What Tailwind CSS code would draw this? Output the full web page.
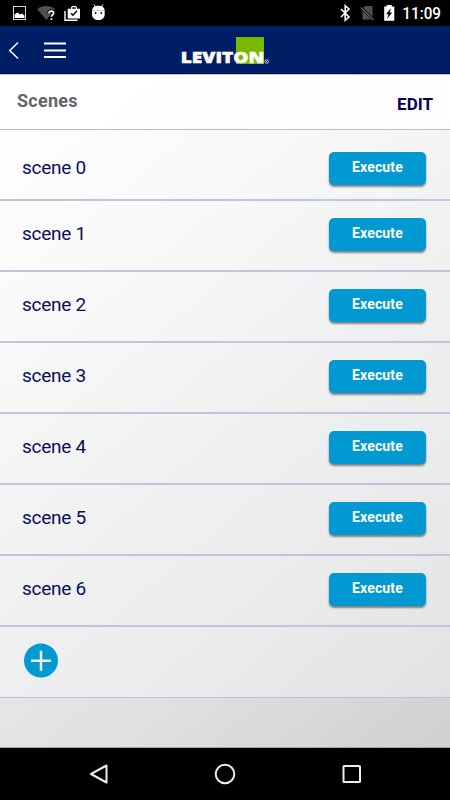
<!DOCTYPE html>
<html lang="en">
<head>
<meta charset="utf-8">
<title>Scenes</title>
<script src="https://cdn.jsdelivr.net/npm/@tailwindcss/browser@4"></script>
</head>
<body class="font-[Roboto,sans-serif]">
<div class="flex h-[800px] w-[450px] flex-col overflow-hidden bg-black">
  <div class="flex h-[26px] shrink-0 items-center">
    <svg width="450" height="26" viewBox="0 0 450 26">
      <rect x="13.500" y="6.500" width="12" height="13" fill="none" stroke="#d8d8d8" stroke-width="1"/>
      <path d="M14.500 18v-3.500l3-2 2.500 2 1.500-1 3 2V18z" fill="#fff"/>
      <path d="M37 9C42 5 50 5 55 9L46.500 20z" fill="#505050"/>
      <path d="M49 13.300c.2-1.600 1.200-2.200 2.400-2.200 1.300 0 2.200.8 2.200 2 0 1.700-2.200 1.800-2.200 3.700M51.400 18.200v1.800" fill="none" stroke="#000" stroke-width="3.500"/>
      <path d="M49 13.300c.2-1.600 1.200-2.200 2.400-2.200 1.300 0 2.200.8 2.200 2 0 1.700-2.200 1.800-2.200 3.700M51.400 18.200v1.800" fill="none" stroke="#fff" stroke-width="1.700"/>
      <path d="M65 11v9.300h12.500" fill="none" stroke="#fff" stroke-width="1.400"/>
      <path d="M67.700 8.700h3.300V7.200l1.200-1.200h3.600L77 7.200v1.500h3v9.800H67.700zM72.300 7.300v1.400h3.400V7.300z" fill="#fff" fill-rule="evenodd"/>
      <path d="M71 13.200l2 2 4-4.500" fill="none" stroke="#000" stroke-width="1.400"/>
      <path d="M92 11.500c0-4.300 2.800-5.700 6.400-5.700s6.300 1.400 6.300 5.700v3c0 3.500-2.700 5.500-6.300 5.500S92 18 92 14.500z" fill="#fff"/>
      <path d="M95.500 7.500L94 4.500M101.300 7.500l1.500-3" stroke="#fff" stroke-width="1"/>
      <path d="M92 10.500h12.700" stroke="#999" stroke-width=".5"/>
      <circle cx="95.600" cy="13" r=".9"/><circle cx="101.300" cy="13" r=".9"/>
      <path d="M341 9l8 8-3.800 3.300V5.700L349 9l-8 8" fill="none" stroke="#fff" stroke-width="1.600"/>
      <path d="M362.500 8.500L365 6h7.500v13.500h-10z" fill="#505050"/>
      <path d="M360.500 6.800l13 13" stroke="#000" stroke-width="2.600"/>
      <path d="M361 7.500l12.500 12.500" stroke="#606060" stroke-width="1.200"/>
      <path d="M384.200 6.500h2.500V5h5v1.500h2.600v14.300h-10.100z" fill="#fff"/>
      <path d="M391 8l-5 6.300h2.500L387 19l5.200-6.400h-2.600z" fill="#000"/>
      <text x="402.300" y="19.300" fill="#fff" font-family="Roboto" font-size="16.500" font-weight="500" textLength="38.700" lengthAdjust="spacingAndGlyphs">11:09</text>
    </svg>
  </div>
  <header class="flex h-12 shrink-0 border-b border-[#00114f] bg-[#001e66]">
    <svg width="450" height="48" viewBox="0 26 450 48">
      <path d="M18 42.500L9.800 50.500l8.200 8" fill="none" stroke="#fff" stroke-width="1.500"/>
      <path d="M44 43.500h22M44 50.500h22M44 57h22" stroke="#fff" stroke-width="2"/>
      <rect x="236" y="37" width="28" height="27" fill="#7ab800"/>
      <text x="180.800" y="63.200" fill="#fff" stroke="#fff" stroke-width=".5" font-family="'Open Sans',sans-serif" font-size="16.500" font-weight="800" textLength="83.500" lengthAdjust="spacingAndGlyphs">LEVITON</text>
      <circle cx="266.700" cy="61.500" r="1.800" fill="none" stroke="#d5daeb" stroke-width=".9"/>
      <circle cx="266.700" cy="61.500" r=".6" fill="#d5daeb"/>
    </svg>
  </header>
  <main class="flex h-[674px] shrink-0 flex-col border-t border-b border-t-[#bfbfc3] border-b-[#a2a3a5] bg-linear-[140deg,#fff_0%,#fbfbfb_15%,#e9eaeb_50%,#dedfe0_75%,#cfd0d2_100%]">
    <div class="flex h-[55px] shrink-0 items-center justify-between border-b border-[#b9bdd4] bg-white/85 pr-[17px] pl-[17px]">
      <h1 class="pb-[2px] text-[18px] leading-[22px] font-bold tracking-[0.25px] text-[#636469]">Scenes</h1>
      <button class="pt-[3px] text-[17px] leading-[22px] font-bold text-[#05005c]">EDIT</button>
    </div>
    <ul class="bg-white/35 text-[#0a0f5c]">
      <li class="flex h-[71px] items-start justify-between border-b-2 border-[#c1c5da] pt-[22px] pr-6 pl-[22px]"><span class="pt-1 text-[19px] leading-6 tracking-[-0.25px]">scene 0</span><button class="h-[33px] w-[97px] rounded-[5px] bg-[#0099d2] pb-[3px] text-[14px] font-bold tracking-[0.15px] text-white shadow-[0_2px_2px_rgba(0,0,0,0.45)]">Execute</button></li>
      <li class="flex h-[71px] items-start justify-between border-b-2 border-[#c1c5da] pt-[17px] pr-6 pl-[22px]"><span class="pt-1 text-[19px] leading-6 tracking-[-0.25px]">scene 1</span><button class="h-[33px] w-[97px] rounded-[5px] bg-[#0099d2] pb-[3px] text-[14px] font-bold tracking-[0.15px] text-white shadow-[0_2px_2px_rgba(0,0,0,0.45)]">Execute</button></li>
      <li class="flex h-[71px] items-start justify-between border-b-2 border-[#c1c5da] pt-[17px] pr-6 pl-[22px]"><span class="pt-1 text-[19px] leading-6 tracking-[-0.25px]">scene 2</span><button class="h-[33px] w-[97px] rounded-[5px] bg-[#0099d2] pb-[3px] text-[14px] font-bold tracking-[0.15px] text-white shadow-[0_2px_2px_rgba(0,0,0,0.45)]">Execute</button></li>
      <li class="flex h-[71px] items-start justify-between border-b-2 border-[#c1c5da] pt-[17px] pr-6 pl-[22px]"><span class="pt-1 text-[19px] leading-6 tracking-[-0.25px]">scene 3</span><button class="h-[33px] w-[97px] rounded-[5px] bg-[#0099d2] pb-[3px] text-[14px] font-bold tracking-[0.15px] text-white shadow-[0_2px_2px_rgba(0,0,0,0.45)]">Execute</button></li>
      <li class="flex h-[71px] items-start justify-between border-b-2 border-[#c1c5da] pt-[17px] pr-6 pl-[22px]"><span class="pt-1 text-[19px] leading-6 tracking-[-0.25px]">scene 4</span><button class="h-[33px] w-[97px] rounded-[5px] bg-[#0099d2] pb-[3px] text-[14px] font-bold tracking-[0.15px] text-white shadow-[0_2px_2px_rgba(0,0,0,0.45)]">Execute</button></li>
      <li class="flex h-[71px] items-start justify-between border-b-2 border-[#c1c5da] pt-[17px] pr-6 pl-[22px]"><span class="pt-1 text-[19px] leading-6 tracking-[-0.25px]">scene 5</span><button class="h-[33px] w-[97px] rounded-[5px] bg-[#0099d2] pb-[3px] text-[14px] font-bold tracking-[0.15px] text-white shadow-[0_2px_2px_rgba(0,0,0,0.45)]">Execute</button></li>
      <li class="flex h-[71px] items-start justify-between border-b-2 border-[#c1c5da] pt-[17px] pr-6 pl-[22px]"><span class="pt-1 text-[19px] leading-6 tracking-[-0.25px]">scene 6</span><button class="h-[33px] w-[97px] rounded-[5px] bg-[#0099d2] pb-[3px] text-[14px] font-bold tracking-[0.15px] text-white shadow-[0_2px_2px_rgba(0,0,0,0.45)]">Execute</button></li>
      <li class="h-[71px] border-b border-[#bfc1d2] pt-4 pl-6">
        <button class="block" aria-label="Add scene"><svg width="34" height="35" viewBox="0 0 34 35"><circle cx="17" cy="17.600" r="17" fill="#0099d2"/><path d="M7 17.700h20M17 7.700v20" stroke="#eef2f4" stroke-width="2.500"/></svg></button>
      </li>
    </ul>
  </main>
  <nav class="flex h-[52px] shrink-0">
    <svg width="450" height="52" viewBox="0 748 450 52" fill="none" stroke="#ededed" stroke-width="2">
      <path d="M106.500 765.500L91 774l15.500 8.500z" stroke-linejoin="round"/>
      <circle cx="225" cy="774" r="9.300"/>
      <rect x="343.500" y="766" width="16.500" height="16" rx=".5"/>
    </svg>
  </nav>
</div>
</body>
</html>
